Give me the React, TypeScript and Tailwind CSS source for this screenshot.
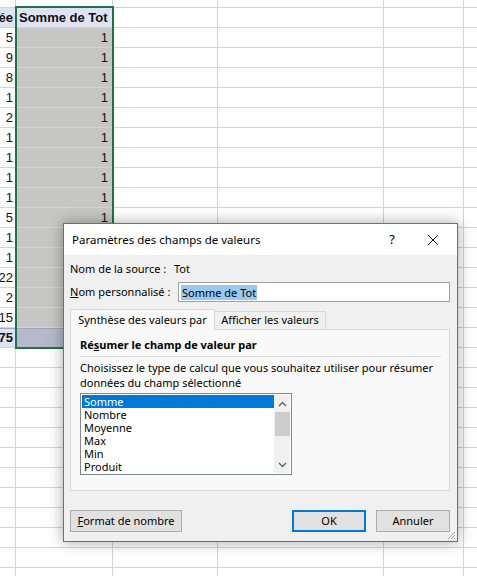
import React from 'react';

const colA = ['5', '9', '8', '1', '2', '1', '1', '1', '1', '5', '1', '1', '22', '2', '15'];

const ui = "font-['Segoe_UI','Noto_Sans',sans-serif] text-[11px] text-[#000] whitespace-nowrap";

function Row({ a, b, kind }: { a?: string; b?: string; kind: 'head' | 'data' | 'total' | 'empty' }) {
  const aBg = kind === 'head' || kind === 'total' ? 'bg-[#dde4f4]' : 'bg-white';
  const bBg =
    kind === 'head' ? 'bg-[#dfe2f1]' : kind === 'total' ? 'bg-[#b5b9c9]' : kind === 'data' ? 'bg-[#c6c7c4]' : 'bg-white';
  const line = kind === 'total' ? 'border-t border-t-[#9aa6c2]' : '';
  const bold = kind === 'head' || kind === 'total' ? 'font-bold' : '';
  return (
    <div className="flex h-[20px] border-b border-[#d4d4d4]">
      <div className={`w-[16px] shrink-0 border-r border-[#d4d4d4] ${aBg} ${line} ${bold} flex items-center justify-end pr-[2px] overflow-hidden whitespace-nowrap`}>
        {a}
      </div>
      <div className={`w-[97px] shrink-0 border-r border-[#d4d4d4] ${bBg} ${line} ${bold} flex items-center ${kind === 'head' ? 'justify-start pl-[3px]' : 'justify-end pr-[4px]'}`}>
        {b}
      </div>
      <div className="w-[105px] shrink-0 border-r border-[#d4d4d4]" />
      <div className="w-[166px] shrink-0 border-r border-[#d4d4d4]" />
      <div className="w-[80px] shrink-0 border-r border-[#d4d4d4]" />
      <div className="flex-1" />
    </div>
  );
}

function Chevron({ up }: { up?: boolean }) {
  return (
    <svg width="9" height="6" viewBox="0 0 9 6" className="block">
      <path d={up ? 'M1 5 L4.5 1.5 L8 5' : 'M1 1 L4.5 4.5 L8 1'} fill="none" stroke="#606060" strokeWidth="1.4" />
    </svg>
  );
}

export default function App() {
  const items = ['Somme', 'Nombre', 'Moyenne', 'Max', 'Min', 'Produit'];
  return (
    <div className="relative w-[477px] h-[576px] overflow-hidden bg-white font-['Liberation_Sans',Arial,sans-serif] text-[13px] text-[#111]">
      {/* sheet */}
      <div className="flex flex-col">
        <div className="flex h-[8px] border-b border-[#d4d4d4]">
          <div className="w-[16px] shrink-0 border-r border-[#d4d4d4]" />
          <div className="w-[97px] shrink-0 border-r border-[#d4d4d4]" />
          <div className="w-[105px] shrink-0 border-r border-[#d4d4d4]" />
          <div className="w-[166px] shrink-0 border-r border-[#d4d4d4]" />
          <div className="w-[80px] shrink-0 border-r border-[#d4d4d4]" />
          <div className="flex-1" />
        </div>
        <Row kind="head" a="ée" b="Somme de Tot" />
        {colA.map((v, i) => (
          <Row key={i} kind="data" a={v} b="1" />
        ))}
        <Row kind="total" a="75" b="" />
        {Array.from({ length: 12 }).map((_, i) => (
          <Row key={'e' + i} kind="empty" />
        ))}
      </div>

      {/* selection border */}
      <div className="absolute left-[15px] top-[6px] w-[99px] h-[343px] border-2 border-[#217346] pointer-events-none" />

      {/* dialog */}
      <div className={`absolute left-[63px] top-[223px] w-[395px] h-[319px] flex flex-col border border-[#6f6f6f] bg-[#f0f0f0] shadow-[0_0_14px_rgba(0,0,0,0.35)] ${ui}`}>
        <div className="h-[31px] bg-white flex items-center pl-[8px] text-[11.5px]">
          <span className="flex-1">Paramètres des champs de valeurs</span>
          <span className="w-[20px] text-center text-[13px] mr-[25px]">?</span>
          <svg width="12" height="12" viewBox="0 0 12 12" className="mr-[18px]">
            <path d="M1 1 L11 11 M11 1 L1 11" stroke="#111" strokeWidth="1" />
          </svg>
        </div>

        <div className="flex-1 flex flex-col px-[6px] pt-[7px]">
          <div className="flex items-center h-[14px]">
            <span className="w-[104px]">Nom de la source :</span>
            <span>Tot</span>
          </div>
          <div className="flex items-center mt-[6px] h-[20px]">
            <span className="w-[108px]">
              <span className="underline">N</span>om personnalisé :
            </span>
            <div className="flex-1 mr-[1px] h-[20px] border border-[#a0a0a0] bg-white flex items-center pl-[2px]">
              <span className="bg-[#99c9ef] leading-[15px] px-[1px]">Somme de Tot</span>
            </div>
          </div>

          {/* tabs */}
          <div className="flex items-end mt-[6px] h-[21px]">
            <div className="w-[145px] h-[21px] border border-b-0 border-[#d9d9d9] bg-[#f9f9f9] flex items-center justify-center relative top-[1px]">
              Synthèse des valeurs par
            </div>
            <div className="w-[111px] h-[18px] border border-l-0 border-b-0 border-[#d9d9d9] flex items-center justify-center">
              Afficher les valeurs
            </div>
          </div>
          <div className="h-[162px] mr-[1px] border border-[#d9d9d9] bg-[#f9f9f9] px-[9px] pt-[8px] flex flex-col">
            <div className="font-bold h-[15px] flex items-center">
              Ré<span className="underline">s</span>umer le champ de valeur par
            </div>
            <div className="h-px bg-[#d9d9d9] mt-[3px] mr-[-1px]" />
            <div className="mt-[3px] leading-[15px]">
              Choisissez le type de calcul que vous souhaitez utiliser pour résumer
              <br />
              données du champ sélectionné
            </div>
            <div className="mt-[3px] w-[212px] h-[82px] border border-[#828790] bg-white flex p-[1px]">
              <div className="flex-1 flex flex-col">
                {items.map((it, i) => (
                  <div
                    key={it}
                    className={`h-[13px] leading-[13px] pl-[2px] ${i === 0 ? 'bg-[#0078d7] text-white' : ''}`}
                  >
                    {it}
                  </div>
                ))}
              </div>
              <div className="w-[16px] bg-[#f0f0f0] flex flex-col items-center">
                <div className="h-[17px] flex items-center justify-center">
                  <Chevron up />
                </div>
                <div className="w-[15px] h-[24px] bg-[#cdcdcd]" />
                <div className="flex-1" />
                <div className="h-[17px] flex items-center justify-center">
                  <Chevron />
                </div>
              </div>
            </div>
          </div>

          {/* buttons */}
          <div className="flex mt-[19px] h-[22px]">
            <button className="w-[112px] h-[22px] border border-[#adadad] bg-[#e1e1e1]">
              <span className="underline">F</span>ormat de nombre
            </button>
            <div className="flex-1" />
            <button className="w-[74px] h-[22px] border-2 border-[#0078d7] bg-[#e1e1e1]">OK</button>
            <button className="w-[74px] h-[22px] ml-[10px] mr-[1px] border border-[#adadad] bg-[#e1e1e1]">Annuler</button>
          </div>
        </div>

        {/* resize grip */}
        <svg width="10" height="10" viewBox="0 0 10 10" className="absolute right-[1px] bottom-[1px]">
          <path d="M9 2 L2 9 M9 5 L5 9 M9 8 L8 9" stroke="#a0a0a0" strokeWidth="1" />
        </svg>
      </div>
    </div>
  );
}
